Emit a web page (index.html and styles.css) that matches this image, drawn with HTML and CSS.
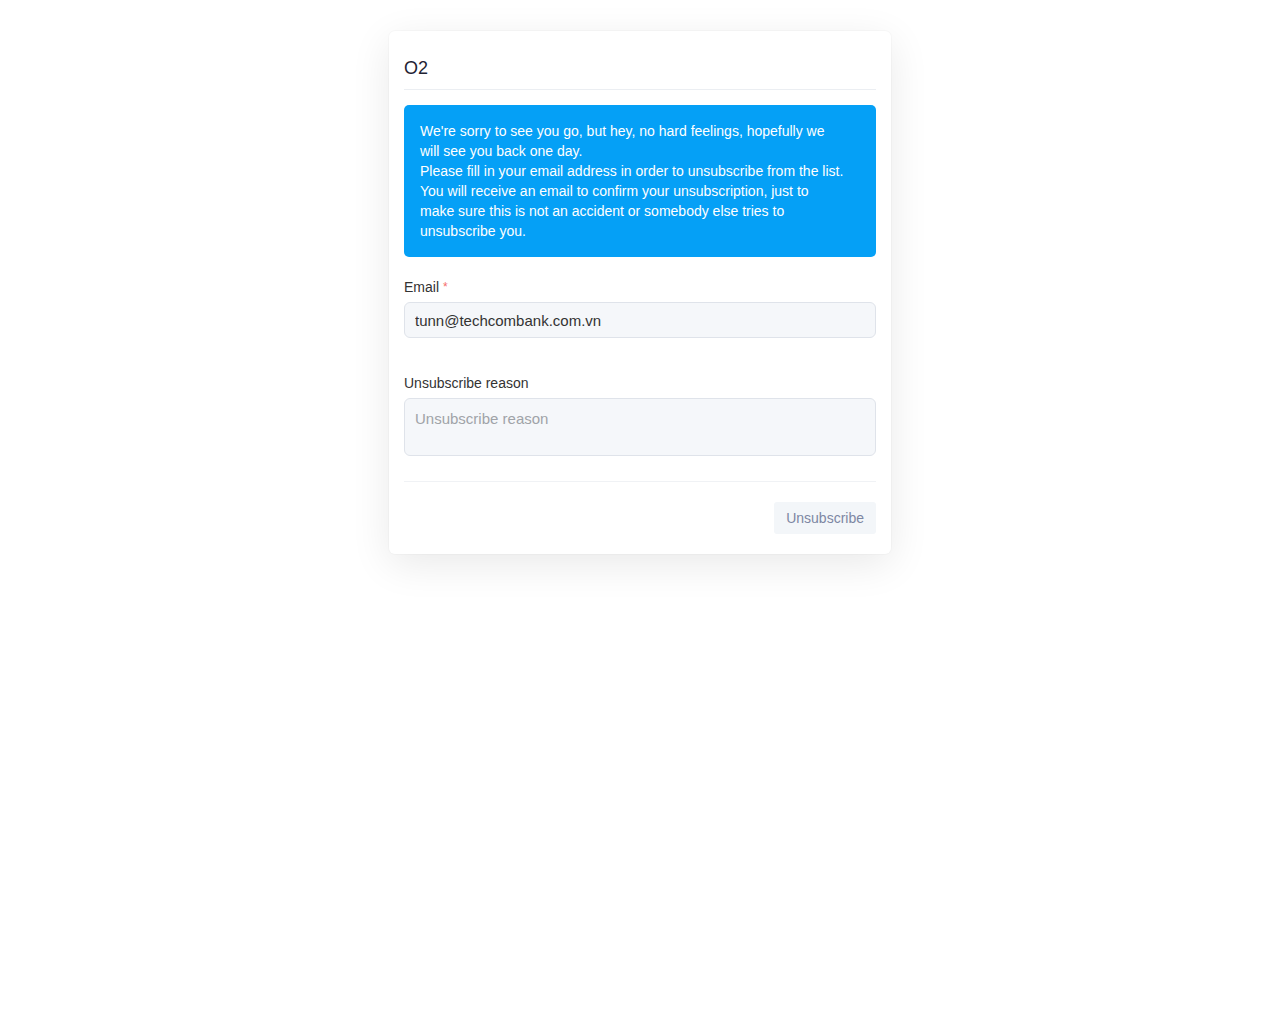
FILE: index.html
```html
<!DOCTYPE html>
<html lang="en">
<head>
    <meta charset="UTF-8">
    <meta name="viewport" content="width=device-width, initial-scale=1.0">
    <title>Unsubscribe</title>
    <link rel="stylesheet" href="styles.css">
</head>
<body>

    <div class="card">
        <h2 class="card-title">O2</h2>

        <div class="alert">
            We're sorry to see you go, but hey, no hard feelings, hopefully we will see you back one day.<br>
            Please fill in your email address in order to unsubscribe from the list.<br>
            You will receive an email to confirm your unsubscription, just to make sure this is not an accident or somebody else tries to unsubscribe you.
        </div>

        <form class="form">
            <div class="field">
                <label for="email">Email <span class="required">*</span></label>
                <input type="email" id="email" value="tunn@techcombank.com.vn">
            </div>

            <div class="field field-last">
                <label for="reason">Unsubscribe reason</label>
                <textarea id="reason" placeholder="Unsubscribe reason"></textarea>
            </div>

            <div class="actions">
                <button type="button" class="btn">Unsubscribe</button>
            </div>
        </form>
    </div>

</body>
</html>
```

FILE: styles.css
```css
body {
    margin: 0;
    padding-bottom: 80px;
    background-color: #ffffff;
    font-family: "Liberation Sans", Arial, sans-serif;
    color: #333333;
}
.card {
    width: 472px;
    margin: 31px auto 0;
    padding: 0 15px 20px;
    background-color: #fff;
    border-radius: 6px;
    box-shadow: 0 10px 40px rgba(0, 0, 0, 0.09), 0 0 0 1px rgba(0, 0, 0, 0.02);
}
.card-title {
    margin: 0;
    padding: 25px 0 9px;
    font-size: 18px;
    line-height: 24px;
    font-weight: normal;
    color: #1f2333;
    border-bottom: 1px solid #ebeef2;
}
.alert {
    margin-top: 15px;
    padding: 16px 32px 16px 16px;
    background-color: #05a0f6;
    color: #fff;
    border-radius: 5px;
    font-size: 14px;
    line-height: 20px;
}
.form {
    margin-top: 20px;
}
.field {
    display: flex;
    flex-direction: column;
    margin-bottom: 35px;
}
.field-last {
    margin-bottom: 25px;
}
.field label {
    font-size: 14px;
    line-height: 20px;
    margin-bottom: 5px;
    color: #333;
}
.required {
    color: #f56c6c;
    font-size: 12px;
    vertical-align: top;
}
.field input, .field textarea {
    box-sizing: border-box;
    width: 100%;
    padding: 0 10px;
    font-family: inherit;
    font-size: 15px;
    color: #333;
    background-color: #f5f7fa;
    border: 1px solid #dfe3ea;
    border-radius: 6px;
    outline: none;
}
.field input {
    height: 36px;
}
.field textarea {
    height: 58px;
    padding-top: 11px;
    resize: none;
}
.field textarea::placeholder {
    color: #a0a3a8;
}
.actions {
    display: flex;
    justify-content: flex-end;
    padding-top: 20px;
    border-top: 1px solid #f0f2f5;
}
.btn {
    height: 32px;
    padding: 0 12px;
    font-family: inherit;
    font-size: 14px;
    color: #7d87a3;
    background-color: #f3f6f9;
    border: none;
    border-radius: 3px;
    cursor: pointer;
}
```
